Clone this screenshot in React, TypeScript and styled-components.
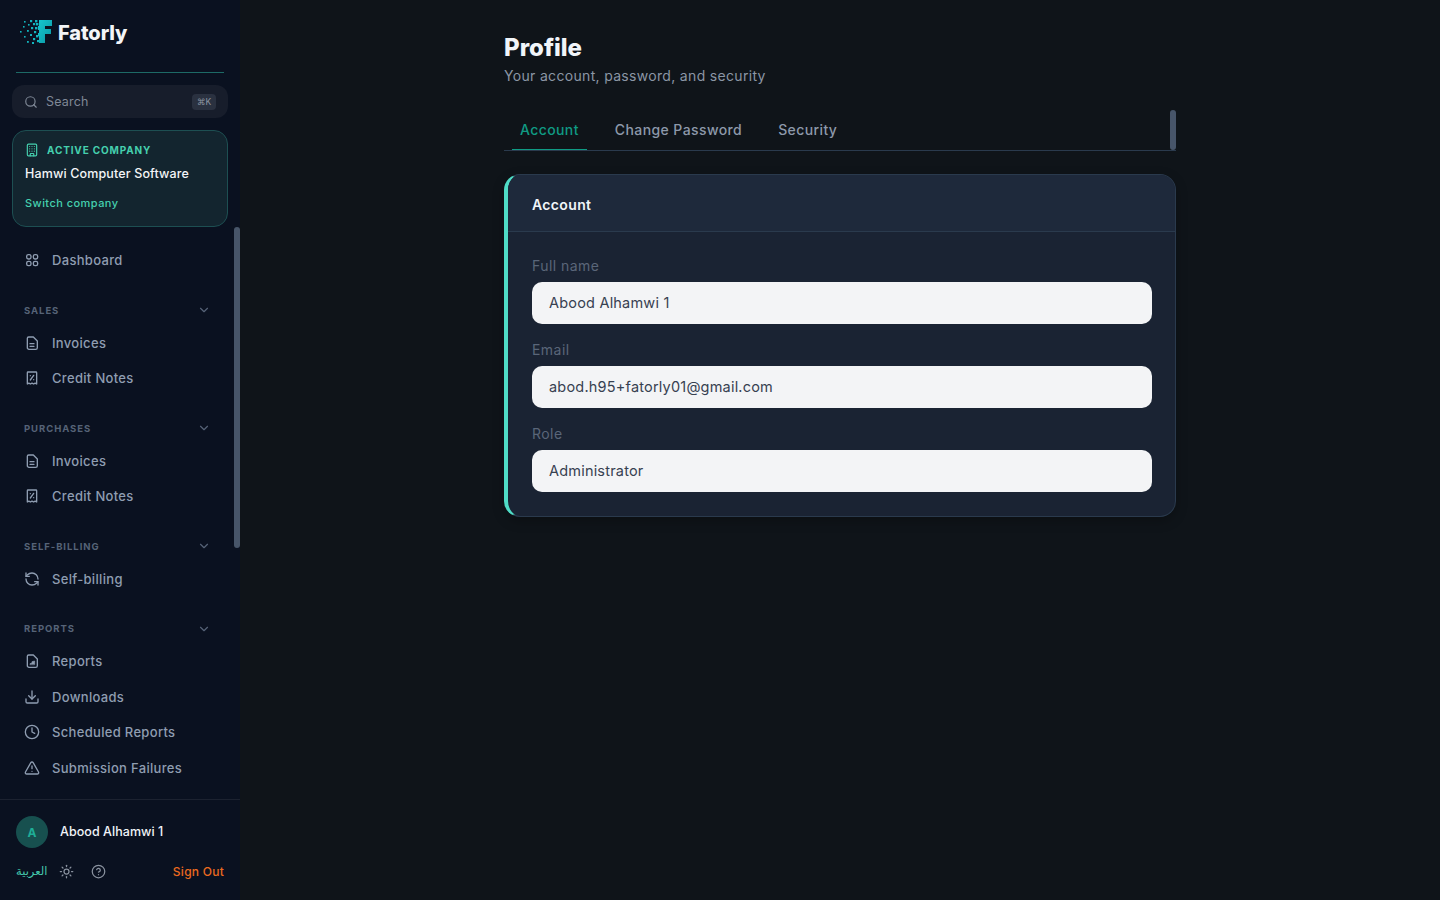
import React from "react";
import styled, { createGlobalStyle } from "styled-components";
import {
  Building,
  ChevronDown,
  CircleHelp,
  Clock,
  Download,
  RefreshCcw,
  Search,
  Sun,
  TriangleAlert,
} from "lucide-react";

const GlobalStyle = createGlobalStyle`
  html, body {
    margin: 0;
    height: 100%;
    background: #0f1419;
  }
  body {
    font-family: Inter, "Noto Sans", sans-serif;
  }
  * {
    box-sizing: border-box;
  }
`;

const Page = styled.div`
  display: flex;
  height: 900px;
  overflow: hidden;
`;

const Sidebar = styled.aside`
  position: relative;
  display: flex;
  flex-direction: column;
  flex: 0 0 240px;
  background: #0a1120;
`;

const SideThumb = styled.div`
  position: absolute;
  top: 227px;
  right: 0;
  width: 6px;
  height: 321px;
  border-radius: 3px;
  background: #475569;
`;

const Brand = styled.div`
  display: flex;
  align-items: center;
  gap: 6px;
  height: 73px;
  margin: 0 16px;
  padding: 0 4px 8px;
  border-bottom: 1px solid #1d6a66;
`;

const BrandName = styled.span`
  padding-top: 2px;
  color: #f3f5f7;
  font-size: 20px;
  font-weight: 800;
  letter-spacing: -0.1px;
`;

const SearchBox = styled.div`
  display: flex;
  align-items: center;
  height: 33px;
  margin: 12px 12px 0;
  padding: 0 12px;
  border-radius: 12px;
  background: #171d2b;
  color: #7f8896;
  font-size: 12.5px;
`;

const SearchLabel = styled.span`
  flex: 1;
  margin-left: 8px;
  letter-spacing: 0.2px;
`;

const Kbd = styled.span`
  width: 24px;
  height: 16px;
  border-radius: 4px;
  background: #2a3140;
  color: #8d96a4;
  font-size: 8.5px;
  line-height: 16px;
  text-align: center;
`;

const CompanyCard = styled.div`
  height: 97px;
  margin: 12px 12px 0;
  padding: 11px 12px 0;
  border: 1px solid #1d4f52;
  border-radius: 14px;
  background: #13252f;
`;

const CompanyTag = styled.div`
  display: flex;
  align-items: center;
  gap: 8px;
  height: 16px;
  color: #45d0ae;
  font-size: 10px;
  font-weight: 700;
  letter-spacing: 0.85px;
`;

const CompanyName = styled.div`
  margin-top: 8px;
  color: #f4f6f8;
  font-size: 12.5px;
  font-weight: 500;
  line-height: 16px;
  letter-spacing: 0.14px;
  white-space: nowrap;
`;

const SwitchLink = styled.div`
  margin-top: 13px;
  color: #45d0ae;
  font-size: 11px;
  font-weight: 500;
  line-height: 16px;
  letter-spacing: 0.45px;
`;

const Nav = styled.nav`
  flex: 1;
  margin-top: 15.5px;
  padding: 0 12px;
  overflow: hidden;
`;

const Row = styled.div`
  display: flex;
  align-items: center;
  gap: 12px;
  height: 35.5px;
  padding: 0 12px;
  color: #8f9db1;
  font-size: 13px;
  font-weight: 500;
  letter-spacing: 0.32px;
  white-space: nowrap;
`;

const Section = styled.section`
  margin-top: 17px;
`;

const SectionHead = styled.div`
  display: flex;
  align-items: center;
  justify-content: space-between;
  height: 30px;
  padding: 0 17px 0 12px;
  color: #566377;
  font-size: 9.5px;
  font-weight: 700;
  letter-spacing: 0.95px;
`;

const Footer = styled.footer`
  flex: 0 0 101px;
  padding: 16px 16px 0;
  border-top: 1px solid #1c2230;
`;

const UserRow = styled.div`
  display: flex;
  align-items: center;
  gap: 12px;
`;

const Avatar = styled.div`
  display: flex;
  align-items: center;
  justify-content: center;
  width: 32px;
  height: 32px;
  border-radius: 50%;
  background: #17504f;
  color: #1fae97;
  font-size: 12px;
  font-weight: 700;
`;

const UserName = styled.span`
  padding-bottom: 2px;
  color: #f1f4f8;
  font-size: 12.5px;
  font-weight: 500;
  letter-spacing: 0.05px;
`;

const FooterActions = styled.div`
  display: flex;
  align-items: center;
  height: 16px;
  margin-top: 15px;
  color: #8a929f;
`;

const LangLink = styled.span`
  width: 43px;
  color: #45c9ad;
  font-family: "DejaVu Sans", sans-serif;
  font-size: 11.5px;
`;

const HelpSlot = styled.span`
  display: flex;
  margin-left: 17px;
`;

const SignOut = styled.span`
  margin-left: auto;
  color: #ea6a1f;
  font-size: 12px;
  font-weight: 500;
  letter-spacing: 0.25px;
`;

const Main = styled.main`
  flex: 1;
  display: flex;
  justify-content: center;
  background: #0f1419;
`;

const Content = styled.div`
  width: 672px;
  padding-top: 33px;
`;

const Title = styled.h1`
  margin: 0;
  color: #f1f5f9;
  font-size: 24px;
  font-weight: 800;
  line-height: 30px;
`;

const Subtitle = styled.p`
  margin: 4px 0 0;
  color: #8b96a5;
  font-size: 14px;
  line-height: 18px;
  letter-spacing: 0.32px;
`;

const TabBar = styled.div`
  position: relative;
  display: flex;
  gap: 20px;
  height: 41px;
  margin-top: 25px;
  padding-left: 8px;
  border-bottom: 1px solid #2a3a4d;
`;

const TabThumb = styled.div`
  position: absolute;
  top: 0;
  right: 0;
  width: 6px;
  height: 40px;
  border-radius: 3px;
  background: #475569;
`;

const Tab = styled.div<{ $active?: boolean }>`
  display: flex;
  align-items: center;
  height: 40px;
  padding: 0 8px 1px;
  border-bottom: 1px solid ${({ $active }) => ($active ? "#0f9b84" : "transparent")};
  color: ${({ $active }) => ($active ? "#0f9b84" : "#8d99aa")};
  font-size: 14px;
  font-weight: 500;
  letter-spacing: 0.4px;
`;

const Card = styled.div`
  height: 343px;
  margin-top: 23px;
  border: 1px solid #2a3a4d;
  border-left: 4px solid #4fdcc6;
  border-radius: 16px;
  background: #1a2333;
  box-shadow: 0 4px 12px rgba(0, 0, 0, 0.25);
  overflow: hidden;
`;

const CardHead = styled.div`
  display: flex;
  align-items: center;
  height: 57px;
  padding: 2px 24px 0;
  border-bottom: 1px solid #2a3a4d;
  border-radius: 12px 0 0 0;
  background: #1e293b;
  color: #f1f5f9;
  font-size: 14px;
  font-weight: 600;
  letter-spacing: 0.35px;
`;

const CardBody = styled.div`
  padding: 24px 23px 0 24px;
`;

const Field = styled.div`
  margin-bottom: 16px;
`;

const FieldLabel = styled.div`
  margin-bottom: 6px;
  color: #5a6679;
  font-size: 14px;
  line-height: 20px;
  letter-spacing: 0.45px;
`;

const FieldValue = styled.div`
  display: flex;
  align-items: center;
  height: 42px;
  padding: 0 17px 2px;
  border-radius: 10px;
  background: #f3f4f6;
  color: #374151;
  font-size: 14.5px;
  letter-spacing: 0.2px;
`;

const LogoMark = () => {
  const dots: [number, number, number][] = [
    [0, 12, 1.6], [3, 7, 1.6], [4, 2, 1.6], [4, 17, 1.6], [7, 22, 1.8], [7, 11, 1.8], [8, 5, 1.6],
    [10, 1, 2.2], [10, 15, 2], [11, 8, 2.2], [13, 4, 2.2], [13, 19, 2.2], [14, 12, 2.2], [12, 23, 2],
    [15, 1, 2.4], [15, 8, 2.4], [16, 16, 2.4], [17, 21, 2.2], [16, 4, 2.4],
  ];
  return (
    <svg width="32" height="26" viewBox="0 0 32 26">
      <defs>
        <linearGradient id="fatorlyF" x1="0" y1="0" x2="1" y2="1">
          <stop offset="0" stopColor="#16c7cf" />
          <stop offset="1" stopColor="#0a96a3" />
        </linearGradient>
      </defs>
      {dots.map(([x, y, s]) => (
        <rect key={`${x}-${y}`} x={x} y={y} width={s} height={s} fill="#12b5bd" />
      ))}
      <path d="M19 1h13v6H25v3h6v5h-6v9h-6V17h-1v-3h1v-3h-1V7h1z" fill="url(#fatorlyF)" />
    </svg>
  );
};

const Glyph: React.FC<{ children: React.ReactNode }> = ({ children }) => (
  <svg
    width="16"
    height="16"
    viewBox="0 0 24 24"
    fill="none"
    stroke="currentColor"
    strokeWidth="2"
    strokeLinecap="round"
    strokeLinejoin="round"
  >
    {children}
  </svg>
);

const DashboardIcon = () => (
  <Glyph>
    <rect x="4" y="4" width="6.5" height="6.5" rx="2.5" />
    <rect x="14" y="4" width="6.5" height="6.5" rx="2.5" />
    <rect x="4" y="14" width="6.5" height="6.5" rx="2.5" />
    <rect x="14" y="14" width="6.5" height="6.5" rx="2.5" />
  </Glyph>
);

const InvoiceIcon = () => (
  <Glyph>
    <path d="M7 3h7l6 6v10a2.5 2.5 0 0 1-2.5 2.5h-10A2.5 2.5 0 0 1 5 19V5a2 2 0 0 1 2-2z" />
    <path d="M9 13h6M9 17h6" />
  </Glyph>
);

const CreditIcon = () => (
  <Glyph>
    <path d="M6 3h12a1 1 0 0 1 1 1v17l-2.3-1.4-2.3 1.4-2.4-1.4-2.4 1.4-2.3-1.4L5 21V4a1 1 0 0 1 1-1z" />
    <path d="M14.5 8l-5 7" />
    <path d="M9.5 8.5h.01M14.5 14.5h.01" />
  </Glyph>
);

const ReportIcon = () => (
  <Glyph>
    <path d="M7 3h7l6 6v10a2.5 2.5 0 0 1-2.5 2.5h-10A2.5 2.5 0 0 1 5 19V5a2 2 0 0 1 2-2z" />
    <path d="M9 17v-1l3-1v-2l4-1v5z" fill="currentColor" strokeWidth="1" />
  </Glyph>
);

const Item: React.FC<{ icon: React.ReactNode; label: string }> = ({ icon, label }) => (
  <Row>
    {icon}
    {label}
  </Row>
);

const groups: { title: string; items: { icon: React.ReactNode; label: string }[] }[] = [
  {
    title: "SALES",
    items: [
      { icon: <InvoiceIcon />, label: "Invoices" },
      { icon: <CreditIcon />, label: "Credit Notes" },
    ],
  },
  {
    title: "PURCHASES",
    items: [
      { icon: <InvoiceIcon />, label: "Invoices" },
      { icon: <CreditIcon />, label: "Credit Notes" },
    ],
  },
  {
    title: "SELF-BILLING",
    items: [{ icon: <RefreshCcw size={16} />, label: "Self-billing" }],
  },
  {
    title: "REPORTS",
    items: [
      { icon: <ReportIcon />, label: "Reports" },
      { icon: <Download size={16} />, label: "Downloads" },
      { icon: <Clock size={16} />, label: "Scheduled Reports" },
      { icon: <TriangleAlert size={16} />, label: "Submission Failures" },
    ],
  },
];

const fields = [
  { label: "Full name", value: "Abood Alhamwi 1" },
  { label: "Email", value: "abod.h95+fatorly01@gmail.com" },
  { label: "Role", value: "Administrator" },
];

export default function App() {
  return (
    <Page>
      <GlobalStyle />
      <Sidebar>
        <Brand>
          <LogoMark />
          <BrandName>Fatorly</BrandName>
        </Brand>
        <SearchBox>
          <Search size={14} />
          <SearchLabel>Search</SearchLabel>
          <Kbd>⌘K</Kbd>
        </SearchBox>
        <CompanyCard>
          <CompanyTag>
            <Building size={14} />
            ACTIVE COMPANY
          </CompanyTag>
          <CompanyName>Hamwi Computer Software</CompanyName>
          <SwitchLink>Switch company</SwitchLink>
        </CompanyCard>
        <Nav>
          <Item icon={<DashboardIcon />} label="Dashboard" />
          {groups.map((group) => (
            <Section key={group.title}>
              <SectionHead>
                {group.title}
                <ChevronDown size={14} />
              </SectionHead>
              {group.items.map((item) => (
                <Item key={item.label} icon={item.icon} label={item.label} />
              ))}
            </Section>
          ))}
        </Nav>
        <Footer>
          <UserRow>
            <Avatar>A</Avatar>
            <UserName>Abood Alhamwi 1</UserName>
          </UserRow>
          <FooterActions>
            <LangLink>العربية</LangLink>
            <Sun size={15} />
            <HelpSlot>
              <CircleHelp size={15} />
            </HelpSlot>
            <SignOut>Sign Out</SignOut>
          </FooterActions>
        </Footer>
        <SideThumb />
      </Sidebar>
      <Main>
        <Content>
          <Title>Profile</Title>
          <Subtitle>Your account, password, and security</Subtitle>
          <TabBar>
            <Tab $active>Account</Tab>
            <Tab>Change Password</Tab>
            <Tab>Security</Tab>
            <TabThumb />
          </TabBar>
          <Card>
            <CardHead>Account</CardHead>
            <CardBody>
              {fields.map((field) => (
                <Field key={field.label}>
                  <FieldLabel>{field.label}</FieldLabel>
                  <FieldValue>{field.value}</FieldValue>
                </Field>
              ))}
            </CardBody>
          </Card>
        </Content>
      </Main>
    </Page>
  );
}
